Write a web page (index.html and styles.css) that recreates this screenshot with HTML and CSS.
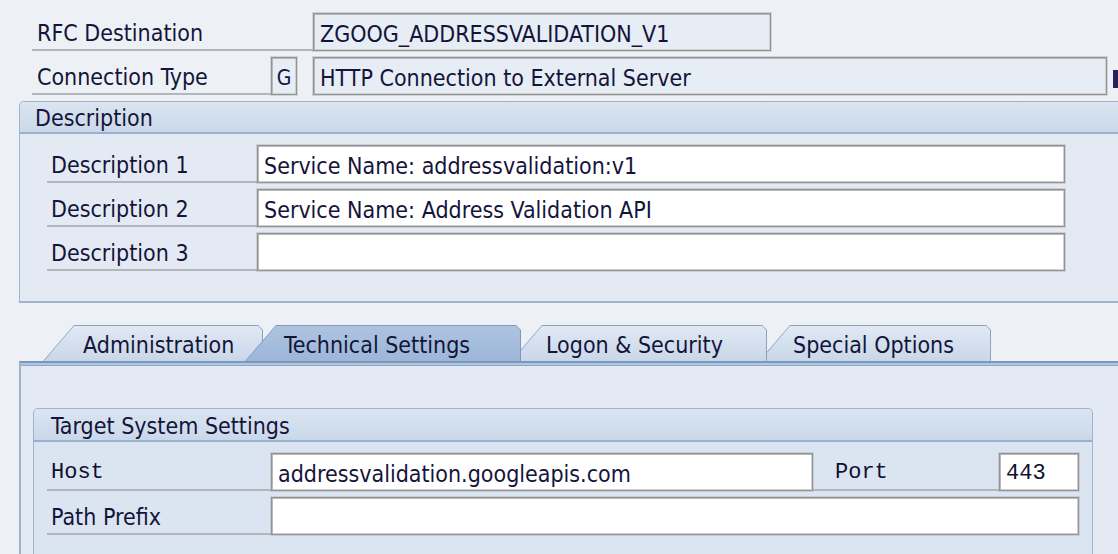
FILE: index.html
```html
<!DOCTYPE html>
<html>
<head>
<meta charset="utf-8">
<link rel="stylesheet" href="styles.css">
</head>
<body>
<div class="screen">
  <div class="head">
    <div class="row">
      <div class="lbl w-rfc">RFC Destination</div>
      <div class="fld ro w-rfcf">ZGOOG_ADDRESSVALIDATION_V1</div>
    </div>
    <div class="row">
      <div class="lbl w-conn">Connection Type</div>
      <div class="fld ro w-g">G</div>
      <div class="fld ro w-connf">HTTP Connection to External Server</div>
      <span class="cut"></span>
    </div>
  </div>

  <section class="group desc">
    <div class="group-hd">Description</div>
    <div class="group-bd">
      <div class="row">
        <div class="lbl w-dl">Description 1</div>
        <div class="fld ed w-df">Service Name: addressvalidation:v1</div>
      </div>
      <div class="row">
        <div class="lbl w-dl">Description 2</div>
        <div class="fld ed w-df">Service Name: Address Validation API</div>
      </div>
      <div class="row">
        <div class="lbl w-dl">Description 3</div>
        <div class="fld ed w-df"></div>
      </div>
    </div>
  </section>

  <div class="tabs">
    <div class="tab t-admin"><div class="tab-face">Administration</div></div>
    <div class="tab t-tech active"><div class="tab-face">Technical Settings</div></div>
    <div class="tab t-logon"><div class="tab-face">Logon &amp; Security</div></div>
    <div class="tab t-special"><div class="tab-face">Special Options</div></div>
  </div>

  <div class="panel">
    <div class="band"></div>
    <section class="group target">
      <div class="group-hd">Target System Settings</div>
      <div class="group-bd">
        <div class="row">
          <div class="lbl mono w-tl">Host</div>
          <div class="fld ed w-host">addressvalidation.googleapis.com</div>
          <div class="lbl mono w-pl">Port</div>
          <div class="fld ed mono w-port">443</div>
        </div>
        <div class="row">
          <div class="lbl w-tl">Path Prefix</div>
          <div class="fld ed w-path"></div>
        </div>
      </div>
    </section>
  </div>
</div>
</body>
</html>
```

FILE: styles.css
```css
* { box-sizing: border-box; }

html, body {
  margin: 0;
  padding: 0;
  width: 1118px;
  height: 554px;
  overflow: hidden;
  background: #edf1f5;
}

.screen {
  font-family: "DejaVu Sans Condensed", "DejaVu Sans", sans-serif;
  font-size: 23px;
  color: #14143a;
  width: 1118px;
  height: 554px;
  overflow: hidden;
}

.head {
  padding: 13px 0 0 32px;
  display: flex;
  flex-direction: column;
  gap: 6px;
}

.row {
  display: flex;
  align-items: stretch;
  height: 38px;
  white-space: nowrap;
}

.lbl {
  display: flex;
  align-items: center;
  padding-left: 5px;
  padding-top: 3px;
  border-bottom: 2px solid #b3b7bd;
  flex: none;
}

.fld {
  display: flex;
  align-items: center;
  padding-left: 6px;
  padding-top: 3px;
  border: 1px solid #939393;
  box-shadow: inset 1px 1px 0 #b8b8b8, inset -1px -1px 0 #d0d0d0, 0 0 0 1px rgba(170, 170, 170, 0.4);
  flex: none;
  overflow: hidden;
}

.ro { background: #e6edf4; }
.ed { background: #ffffff; }

.mono {
  font-family: "Liberation Mono", "Courier New", monospace;
  font-size: 22px;
  font-weight: normal;
  color: #101030;
}

.w-rfc { width: 281px; }
.w-rfcf { width: 458px; }
.w-conn { width: 239px; }
.w-g { width: 26px; justify-content: center; padding-left: 0; font-size: 21px; }
.w-connf { width: 794px; margin-left: 16px; }
.cut {
  flex: none;
  width: 6px;
  height: 18px;
  margin: 13px 0 0 6px;
  background: #2a1f5a;
}

/* groups */
.group {
  border: 1px solid #9fb3cd;
  border-radius: 5px 5px 0 0;
}

.group-hd {
  display: flex;
  align-items: center;
  height: 32px;
  padding-left: 15px;
  padding-top: 2px;
  background: linear-gradient(#dbe5f0, #c9d8e9);
  border-bottom: 2px solid #9ab0cc;
  border-radius: 4px 4px 0 0;
}

.desc {
  margin: 6px 0 0 19px;
  width: 1120px;
  border-bottom-width: 2px;
  border-right: none;
}

.desc .group-bd {
  background: #e3eaf3;
  padding: 11px 0 30px 27px;
  display: flex;
  flex-direction: column;
  gap: 6px;
}

.desc .lbl { padding-left: 4px; }

.w-dl { width: 210px; }
.w-df { width: 808px; }

/* tabs */
.tabs {
  display: flex;
  height: 36px;
  margin: 22px 0 0 43px;
}

.tab {
  position: relative;
  height: 36px;
  flex: none;
  background: #8aa2c3;
  clip-path: polygon(31px 0, calc(100% - 5px) 0, 100% 5px, 100% 100%, 0 100%);
}

.tab-face {
  height: 35px;
  margin: 1px 1px 0 1px;
  padding-top: 2px;
  display: flex;
  align-items: center;
  background: linear-gradient(#e1e9f3, #c8d7e9);
  clip-path: polygon(30px 0, calc(100% - 4px) 0, 100% 4px, 100% 100%, 0 100%);
  white-space: nowrap;
}

.tab.active { background: #7f99bd; z-index: 5; }
.tab.active .tab-face { background: linear-gradient(#adc3e0, #9db6d8); }

.t-admin { width: 220px; z-index: 4; }
.t-admin .tab-face { padding-left: 39px; }
.t-tech { width: 276px; margin-left: -18px; }
.t-tech .tab-face { padding-left: 38px; }
.t-logon { width: 256px; margin-left: -10px; z-index: 3; }
.t-logon .tab-face { padding-left: 34px; }
.t-special { width: 232px; margin-left: -8px; z-index: 2; }
.t-special .tab-face { padding-left: 33px; }

/* panel */
.panel {
  margin-left: 19px;
  height: 193px;
  border-top: 2px solid #7b98bf;
  border-left: 2px solid #9db2cd;
  background: #e3eaf3;
}

.band {
  height: 3px;
  background: linear-gradient(#b2c6de 0 2px, #8ea8ca 2px);
}

.target {
  margin: 42px 0 0 12px;
  width: 1060px;
  border-bottom: none;
}

.target .group-hd {
  height: 33px;
  padding-left: 17px;
}

.target .group-bd {
  background: #dbe5f1;
  padding: 11px 0 20px 13px;
  display: flex;
  flex-direction: column;
  gap: 6px;
}

.target .lbl { padding-left: 4px; }

.w-tl { width: 224px; }
.w-host { width: 542px; }
.w-pl { width: 186px; padding-left: 22px !important; }
.w-port { width: 80px; }
.w-path { width: 808px; }
```
